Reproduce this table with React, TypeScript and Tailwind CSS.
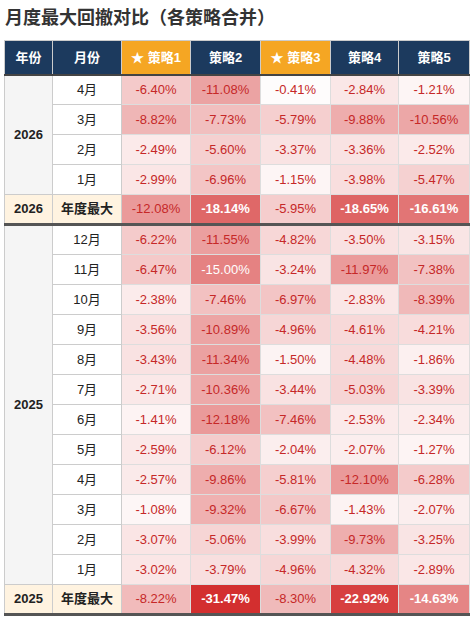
import React from 'react'

type Row = { month: string; values: number[] }

const strategies = [
  { name: '策略1', star: true },
  { name: '策略2', star: false },
  { name: '策略3', star: true },
  { name: '策略4', star: false },
  { name: '策略5', star: false },
]

const years: { year: string; rows: Row[]; max: number[] }[] = [
  {
    year: '2026',
    rows: [
      { month: '4月', values: [-6.4, -11.08, -0.41, -2.84, -1.21] },
      { month: '3月', values: [-8.82, -7.73, -5.79, -9.88, -10.56] },
      { month: '2月', values: [-2.49, -5.6, -3.37, -3.36, -2.52] },
      { month: '1月', values: [-2.99, -6.96, -1.15, -3.98, -5.47] },
    ],
    max: [-12.08, -18.14, -5.95, -18.65, -16.61],
  },
  {
    year: '2025',
    rows: [
      { month: '12月', values: [-6.22, -11.55, -4.82, -3.5, -3.15] },
      { month: '11月', values: [-6.47, -15.0, -3.24, -11.97, -7.38] },
      { month: '10月', values: [-2.38, -7.46, -6.97, -2.83, -8.39] },
      { month: '9月', values: [-3.56, -10.89, -4.96, -4.61, -4.21] },
      { month: '8月', values: [-3.43, -11.34, -1.5, -4.48, -1.86] },
      { month: '7月', values: [-2.71, -10.36, -3.44, -5.03, -3.39] },
      { month: '6月', values: [-1.41, -12.18, -7.46, -2.53, -2.34] },
      { month: '5月', values: [-2.59, -6.12, -2.04, -2.07, -1.27] },
      { month: '4月', values: [-2.57, -9.86, -5.81, -12.1, -6.28] },
      { month: '3月', values: [-1.08, -9.32, -6.67, -1.43, -2.07] },
      { month: '2月', values: [-3.07, -5.06, -3.99, -9.73, -3.25] },
      { month: '1月', values: [-3.02, -3.79, -4.96, -4.32, -2.89] },
    ],
    max: [-8.22, -31.47, -8.3, -22.92, -14.63],
  },
]

// white -> #d32f2f, full at 25% drawdown
function cellBg(v: number) {
  const t = Math.min(Math.abs(v) / 25, 1)
  const r = Math.round(255 - 44 * t)
  const g = Math.round(255 - 208 * t)
  return `rgb(${r}, ${g}, ${g})`
}

function ValueCell({ v, yearRow }: { v: number; yearRow?: boolean }) {
  const strong = Math.abs(v) >= 14
  return (
    <td
      className={`border border-[#ddd] text-center text-[13px] ${
        strong ? 'text-white' : 'text-[#c62828]'
      } ${strong && yearRow ? 'font-bold' : ''}`}
      style={{ backgroundColor: cellBg(v) }}
    >
      {v.toFixed(2)}%
    </td>
  )
}

function App() {
  return (
    <div
      className="min-h-screen bg-white pl-[4px] pt-[6px]"
      style={{ fontFamily: '"Liberation Sans", Arial, "Noto Sans CJK SC", sans-serif' }}
    >
      <h1 className="text-[18px] leading-[24px] font-bold text-[#333] mb-[10px] pl-[1px]">
        月度最大回撤对比（各策略合并）
      </h1>
      <table className="w-[465px] table-fixed border-collapse">
        <colgroup>
          <col className="w-[48px]" />
          <col className="w-[69px]" />
          <col className="w-[69px]" />
          <col className="w-[70px]" />
          <col className="w-[70px]" />
          <col className="w-[68px]" />
          <col className="w-[71px]" />
        </colgroup>
        <thead>
          <tr className="h-[34px] border-b-2 border-b-[#444]">
            <th className="bg-[#1c3a5e] text-white text-[13px] font-bold border border-[#ccc] border-b-2 border-b-[#444]">年份</th>
            <th className="bg-[#1c3a5e] text-white text-[13px] font-bold border border-[#ccc] border-b-2 border-b-[#444]">月份</th>
            {strategies.map((s) => (
              <th
                key={s.name}
                className={`${s.star ? 'bg-[#f5a623]' : 'bg-[#1c3a5e]'} text-white text-[13px] font-bold border border-[#ccc] border-b-2 border-b-[#444]`}
              >
                {s.star ? `★ ${s.name}` : s.name}
              </th>
            ))}
          </tr>
        </thead>
        <tbody>
          {years.map((y) => (
            <React.Fragment key={y.year}>
              {y.rows.map((row, i) => (
                <tr key={row.month} className="h-[30px]">
                  {i === 0 && (
                    <td
                      rowSpan={y.rows.length}
                      className="bg-[#f5f5f5] border border-[#ccc] text-center text-[13px] font-bold text-[#222]"
                    >
                      {y.year}
                    </td>
                  )}
                  <td className="bg-white border border-[#ccc] text-center text-[13px] text-[#222]">{row.month}</td>
                  {row.values.map((v, j) => (
                    <ValueCell key={j} v={v} />
                  ))}
                </tr>
              ))}
              <tr className="h-[30px] border-b-[3px] border-b-[#555]">
                <td className="bg-[#fff3e0] border border-[#ccc] border-b-[3px] border-b-[#555] text-center text-[13px] font-bold text-[#222]">
                  {y.year}
                </td>
                <td className="bg-[#fff3e0] border border-[#ccc] border-b-[3px] border-b-[#555] text-center text-[13px] font-bold text-[#222]">
                  年度最大
                </td>
                {y.max.map((v, j) => (
                  <ValueCell key={j} v={v} yearRow />
                ))}
              </tr>
            </React.Fragment>
          ))}
        </tbody>
      </table>
    </div>
  )
}

export default App
